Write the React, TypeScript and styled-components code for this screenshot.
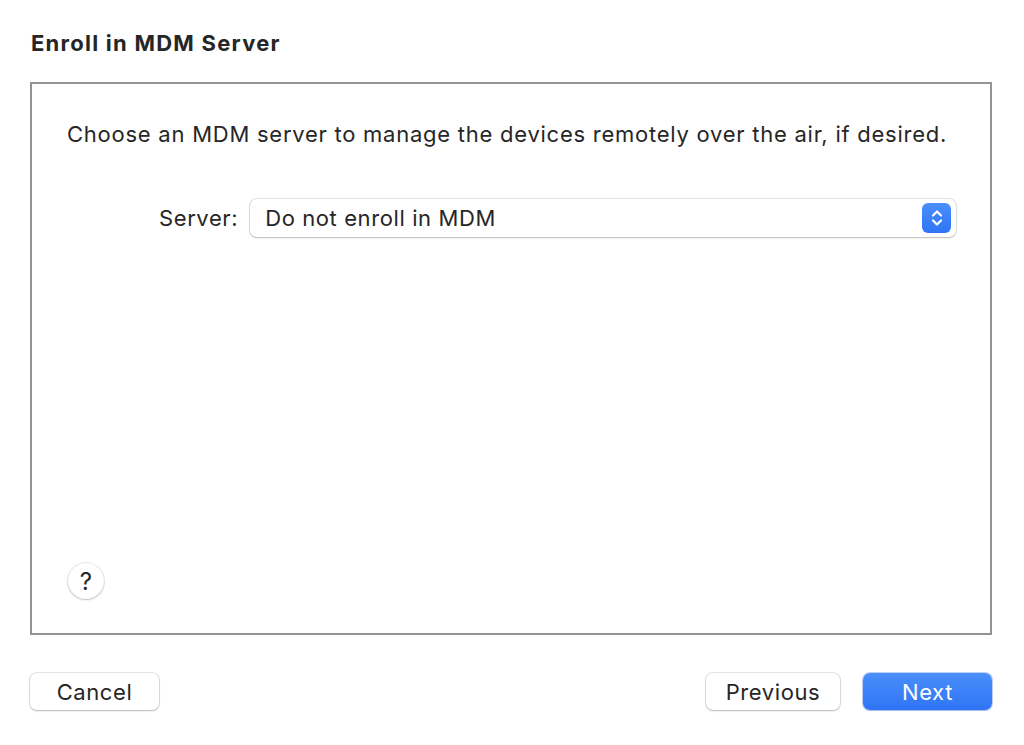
import React from "react";
import styled, { createGlobalStyle } from "styled-components";

const Global = createGlobalStyle`
  html, body { margin: 0; padding: 0; background: #ffffff; }
  body { font-family: Inter, "Noto Sans", "Liberation Sans", sans-serif; color: #262626; }
`;

const Window = styled.div`
  width: 1024px;
  height: 745px;
  box-sizing: border-box;
  padding: 30px 32px 0 30px;
  display: flex;
  flex-direction: column;
  background: #ffffff;
`;

const Title = styled.h1`
  margin: 0 0 0 1px;
  font-size: 22px;
  font-weight: 700;
  line-height: 26px;
  color: #262626;
  letter-spacing: 1.25px;
`;

const Panel = styled.div`
  margin-top: 26px;
  height: 553px;
  box-sizing: border-box;
  border: 2px solid #939393;
  background: #ffffff;
  display: flex;
  flex-direction: column;
  padding: 36px 34px 34px 35px;
`;

const Intro = styled.p`
  margin: 0;
  font-size: 22px;
  line-height: 28px;
  color: #262626;
  letter-spacing: 0.75px;
`;

const FieldRow = styled.div`
  margin-top: 51px;
  display: flex;
  align-items: center;
  padding-left: 92px;
  gap: 12px;
`;

const Label = styled.span`
  font-size: 22px;
  letter-spacing: 0.6px;
  color: #262626;
`;

const Popup = styled.div`
  flex: 1;
  height: 38px;
  box-sizing: border-box;
  border-radius: 7px;
  background: #ffffff;
  box-shadow: 0 0 0 1px rgba(0,0,0,0.1), 0 1px 2px rgba(0,0,0,0.18);
  display: flex;
  align-items: center;
  justify-content: space-between;
  padding: 0 5px 0 15px;
  font-size: 22px;
  letter-spacing: 0.6px;
  color: #262626;
`;

const Stepper = styled.span`
  width: 29px;
  height: 30px;
  border-radius: 6px;
  background: linear-gradient(#4a8ffb, #2f74f5);
  display: flex;
  align-items: center;
  justify-content: center;
`;

const Spacer = styled.div`
  flex: 1;
`;

const Help = styled.button`
  width: 36px;
  height: 36px;
  border-radius: 50%;
  border: none;
  background: #ffffff;
  box-shadow: 0 0 0 1px rgba(0,0,0,0.08), 0 1px 2px rgba(0,0,0,0.2);
  font-family: inherit;
  font-size: 24px;
  font-weight: 400;
  color: #262626;
  padding: 0;
  display: flex;
  align-items: center;
  justify-content: center;
  margin-left: 1px;
`;

const Footer = styled.div`
  margin-top: 38px;
  display: flex;
  align-items: center;
  gap: 23px;
`;

const Button = styled.button<{ $primary?: boolean; $w: number }>`
  width: ${(p) => p.$w}px;
  height: 37px;
  border-radius: 7px;
  border: none;
  font-family: inherit;
  font-size: 22px;
  letter-spacing: 0.6px;
  padding: 0;
  color: ${(p) => (p.$primary ? "#ffffff" : "#262626")};
  background: ${(p) => (p.$primary ? "linear-gradient(#4a8ffb, #2f74f5)" : "#ffffff")};
  box-shadow: ${(p) =>
    p.$primary
      ? "0 0 0 1px rgba(40,100,230,0.3), 0 1px 1px rgba(0,0,0,0.12)"
      : "0 0 0 1px rgba(0,0,0,0.1), 0 1px 2px rgba(0,0,0,0.2)"};
`;

export default function App() {
  return (
    <>
      <Global />
      <Window>
        <Title>Enroll in MDM Server</Title>
        <Panel>
          <Intro>Choose an MDM server to manage the devices remotely over the air, if desired.</Intro>
          <FieldRow>
            <Label>Server:</Label>
            <Popup>
              <span>Do not enroll in MDM</span>
              <Stepper>
                <svg width="14" height="20" viewBox="0 0 14 20" fill="none" stroke="#ffffff" strokeWidth="2.2" strokeLinecap="round" strokeLinejoin="round">
                  <path d="M3 7.5 L7 3.5 L11 7.5" />
                  <path d="M3 12.5 L7 16.5 L11 12.5" />
                </svg>
              </Stepper>
            </Popup>
          </FieldRow>
          <Spacer />
          <Help>?</Help>
        </Panel>
        <Footer>
          <Button $w={129}>Cancel</Button>
          <Spacer />
          <Button $w={134}>Previous</Button>
          <Button $w={129} $primary>Next</Button>
        </Footer>
      </Window>
    </>
  );
}
